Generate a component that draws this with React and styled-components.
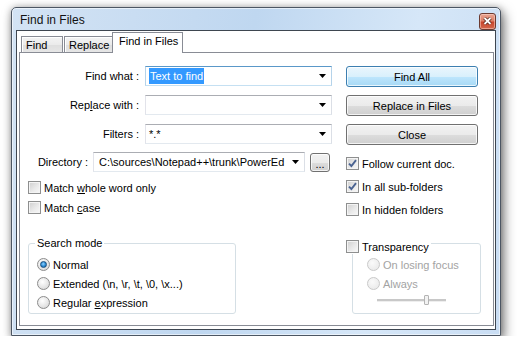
import styled, { createGlobalStyle } from "styled-components";

const GlobalStyle = createGlobalStyle`
  body {
    margin: 0;
    background: #ffffff;
    font-family: "Liberation Sans", Arial, sans-serif;
    font-size: 11px;
    color: #000;
  }
`;

const Window = styled.div`
  box-sizing: border-box;
  width: 490px;
  height: 329px;
  margin: 7px 0 0 11px;
  padding: 0 4px 5px 4px;
  display: flex;
  flex-direction: column;
  border: 1px solid #4c5663;
  border-radius: 5px 5px 0 0;
  background: linear-gradient(100deg, #d3e3f4 0%, #bfd7f0 45%, #d6e7f8 75%, #c9ddf3 100%);
  box-shadow: 3px 5px 12px rgba(0, 0, 0, 0.5), 0 0 7px rgba(0, 0, 0, 0.25),
    inset 0 0 0 1px rgba(255, 255, 255, 0.55);
`;

const TitleBar = styled.div`
  height: 22px;
  display: flex;
  align-items: center;
  justify-content: space-between;
  padding-left: 4px;
`;

const Title = styled.span`
  font-size: 12px;
  color: #111;
  margin-top: 2px;
`;

const CloseButton = styled.div`
  width: 17px;
  height: 17px;
  box-sizing: border-box;
  margin: 4px 0 0 0;
  border: 1px solid #6c3a30;
  border-radius: 3px;
  background: linear-gradient(to bottom, #e9a593 0%, #dc8068 45%, #c8452c 55%, #d4694d 100%);
  box-shadow: inset 0 0 0 1px rgba(255, 220, 210, 0.5);
  display: flex;
  align-items: center;
  justify-content: center;
`;

const Client = styled.div`
  flex: 1;
  display: flex;
  flex-direction: column;
  background: #ffffff;
  border: 1px solid #3e4650;
  padding: 2px 1px 3px 2px;
`;

const TabStrip = styled.div`
  display: flex;
  align-items: flex-end;
  height: 20px;
  padding-left: 2px;
  margin-bottom: -1px;
  position: relative;
  z-index: 1;
`;

const Tab = styled.div`
  box-sizing: border-box;
  width: ${(p) => p.$w}px;
  height: ${(p) => (p.$active ? 21 : 17)}px;
  margin-left: ${(p) => (p.$active ? -1 : 0)}px;
  margin-right: ${(p) => (p.$gap ? 1 : 0)}px;
  padding: ${(p) => (p.$active ? "2px 0 0 6px" : "2px 0 0 4px")};
  border: 1px solid #898c95;
  border-bottom: ${(p) => (p.$active ? "none" : "1px solid #898c95")};
  background: ${(p) =>
    p.$active ? "#ffffff" : "linear-gradient(to bottom, #f4f4f4 0%, #ebebeb 50%, #dedede 51%, #e6e6e6 100%)"};
  box-shadow: ${(p) => (p.$active ? "none" : "inset 0 1px 0 #fff, inset 1px 0 0 #fff")};
  line-height: 13px;
  white-space: nowrap;
  position: relative;
  z-index: ${(p) => (p.$active ? 0 : 1)};
`;

const Panel = styled.div`
  flex: 1;
  display: flex;
  border: 1px solid #898c95;
  background: #ffffff;
  padding-top: 13px;
`;

const LeftCol = styled.div`
  width: 326px;
  display: flex;
  flex-direction: column;
`;

const RightCol = styled.div`
  width: 134px;
  display: flex;
  flex-direction: column;
`;

const FieldGrid = styled.div`
  display: grid;
  grid-template-columns: 121px 187px;
  grid-auto-rows: 20px;
  column-gap: 4px;
  row-gap: 9px;
  align-items: center;
`;

const FieldLabel = styled.span`
  text-align: right;
  padding-right: ${(p) => p.$pr || 0}px;
  white-space: nowrap;
`;

const U = styled.span`
  text-decoration: underline;
`;

const Combo = styled.div`
  box-sizing: border-box;
  height: 20px;
  width: ${(p) => (p.$w ? `${p.$w}px` : "auto")};
  display: flex;
  align-items: center;
  padding: 0 5px 0 2px;
  background: #fff;
  border: 1px solid;
  border-color: ${(p) =>
    p.$focused ? "#5a98c9 #b5d3ea #c5e0f2 #b5d3ea" : "#abadb3 #dbdfe6 #e3e9ef #e2e3ea"};
`;

const ComboText = styled.span`
  flex: 1;
  white-space: nowrap;
  padding-left: ${(p) => p.$pl ?? 1}px;
  line-height: 16px;
`;

const Selected = styled.span`
  background: #3399ff;
  color: #fff;
  padding: 0 1px;
  line-height: 16px;
  display: inline-block;
`;

const Arrow = () => (
  <svg width="7" height="4" viewBox="0 0 7 4" style={{ flexShrink: 0, marginLeft: 4 }}>
    <path d="M0 0 H7 L3.5 4 Z" fill="#000" />
  </svg>
);

const DirRow = styled.div`
  display: flex;
  align-items: center;
  height: 20px;
  margin-top: 8px;
`;

const DirLabel = styled.span`
  width: 68px;
  text-align: right;
  margin-right: 5px;
  white-space: nowrap;
`;

const Button = styled.div`
  box-sizing: border-box;
  width: ${(p) => p.$w || 132}px;
  height: ${(p) => p.$h || 21}px;
  display: flex;
  align-items: center;
  justify-content: center;
  border: 1px solid ${(p) => (p.$default ? "#3c7fb1" : "#707070")};
  border-radius: 3px;
  background: ${(p) =>
    p.$default
      ? "linear-gradient(to bottom, #eaf6fd 0%, #d9f0fc 50%, #bee6fd 51%, #a7d9f5 100%)"
      : "linear-gradient(to bottom, #f2f2f2 0%, #ebebeb 50%, #dddddd 51%, #cfcfcf 100%)"};
  box-shadow: inset 0 0 0 1px rgba(255, 255, 255, 0.75);
  white-space: nowrap;
`;

const DotsButton = styled(Button)`
  margin-left: 5px;
  align-items: flex-end;
  padding-bottom: 3px;
  line-height: 8px;
`;

const ButtonStack = styled.div`
  display: flex;
  flex-direction: column;
  gap: 8px;
`;

const OptionList = styled.div`
  display: flex;
  flex-direction: column;
  gap: ${(p) => p.$gap}px;
  margin-top: ${(p) => p.$mt}px;
  padding-left: ${(p) => p.$pl || 0}px;
`;

const OptionRow = styled.div`
  display: flex;
  align-items: center;
  height: 15px;
  gap: 3px;
  white-space: nowrap;
  color: ${(p) => (p.$disabled ? "#a3a3a3" : "#000")};
`;

const CheckBoxBox = styled.span`
  box-sizing: border-box;
  width: 13px;
  height: 13px;
  flex-shrink: 0;
  border: 1px solid #8e8f8f;
  background: linear-gradient(135deg, #cfcfcf 0%, #e9e9e9 55%, #f9f9f9 100%);
  box-shadow: inset 0 0 0 1px #f4f4f4;
  display: inline-flex;
  align-items: center;
  justify-content: center;
`;

const CheckBox = ({ checked }) => (
  <CheckBoxBox>
    {checked && (
      <svg width="9" height="9" viewBox="0 0 9 9">
        <path d="M1 4.6 L3.4 7 L8 1.2" fill="none" stroke="#4a6391" strokeWidth="1.9" />
      </svg>
    )}
  </CheckBoxBox>
);

const RadioDot = styled.span`
  box-sizing: border-box;
  width: 13px;
  height: 13px;
  flex-shrink: 0;
  border-radius: 50%;
  border: 1px solid ${(p) => (p.$disabled ? "#c9c9c9" : "#8c8c8c")};
  background: ${(p) =>
    p.$disabled
      ? "radial-gradient(circle at 40% 35%, #fafafa, #e6e6e6)"
      : "radial-gradient(circle at 40% 35%, #ffffff 0%, #e4e4e4 60%, #cfcfcf 100%)"};
  display: inline-flex;
  align-items: center;
  justify-content: center;

  &::after {
    content: "";
    display: ${(p) => (p.$checked ? "block" : "none")};
    width: 7px;
    height: 7px;
    border-radius: 50%;
    box-sizing: border-box;
    border: 1px solid #1b4f7d;
    background: radial-gradient(circle at 45% 40%, #8fd2ff 0%, #2a8ad4 55%, #1a5c99 100%);
  }
`;

const GroupBox = styled.div`
  position: relative;
  box-sizing: border-box;
  width: ${(p) => p.$w}px;
  height: 71px;
  margin-top: ${(p) => p.$mt}px;
  margin-left: ${(p) => p.$ml}px;
  border: 1px solid #d5dfe5;
  border-radius: 3px;
  padding: 11px 0 0 ${(p) => p.$pl}px;
`;

const Legend = styled.span`
  position: absolute;
  top: -8px;
  left: 6px;
  padding: 0 2px;
  background: #fff;
  line-height: 14px;
`;

const LegendCheck = styled.div`
  position: absolute;
  top: -5px;
  left: -7px;
  padding-right: 2px;
  background: #fff;
`;

const RadioList = styled.div`
  display: flex;
  flex-direction: column;
`;

const RadioRow = styled.div`
  display: flex;
  align-items: center;
  gap: 3px;
  height: 19px;
  white-space: nowrap;
  color: ${(p) => (p.$disabled ? "#a3a3a3" : "#000")};
`;

const Slider = styled.div`
  position: relative;
  width: 69px;
  height: 12px;
  margin: 1px 0 0 10px;

  &::before {
    content: "";
    position: absolute;
    left: 0;
    right: 0;
    top: 5px;
    height: 2px;
    background: #c8c8c8;
    border-bottom: 1px solid #eeeeee;
  }
`;

const Thumb = styled.span`
  position: absolute;
  left: 47px;
  top: 1px;
  width: 5px;
  height: 10px;
  box-sizing: border-box;
  border: 1px solid #b4b4b4;
  border-radius: 1px;
  background: #f2f2f2;
`;

export default function App() {
  return (
    <>
      <GlobalStyle />
      <Window>
        <TitleBar>
          <Title>Find in Files</Title>
          <CloseButton>
            <svg width="9" height="8" viewBox="0 0 9 8">
              <path d="M1.5 1 L7.5 7 M7.5 1 L1.5 7" stroke="#4a1a10" strokeWidth="3.2" />
              <path d="M1.5 1 L7.5 7 M7.5 1 L1.5 7" stroke="#ffffff" strokeWidth="1.8" />
            </svg>
          </CloseButton>
        </TitleBar>
        <Client>
          <TabStrip>
            <Tab $w={42} $gap>Find</Tab>
            <Tab $w={49}>Replace</Tab>
            <Tab $w={71} $active>Find in Files</Tab>
          </TabStrip>
          <Panel>
            <LeftCol>
              <FieldGrid>
                <FieldLabel $pr={2}>Find what :</FieldLabel>
                <Combo $focused>
                  <ComboText>
                    <Selected>Text to find</Selected>
                  </ComboText>
                  <Arrow />
                </Combo>
                <FieldLabel $pr={2}>
                  Rep<U>l</U>ace with :
                </FieldLabel>
                <Combo>
                  <ComboText />
                  <Arrow />
                </Combo>
                <FieldLabel $pr={2}>Filters :</FieldLabel>
                <Combo>
                  <ComboText>*.*</ComboText>
                  <Arrow />
                </Combo>
              </FieldGrid>
              <DirRow>
                <DirLabel>Directory :</DirLabel>
                <Combo $w={212}>
                  <ComboText $pl={3}>C:\sources\Notepad++\trunk\PowerEd</ComboText>
                  <Arrow />
                </Combo>
                <DotsButton $w={20} $h={19}>...</DotsButton>
              </DirRow>
              <OptionList $mt={8} $gap={5} $pl={8}>
                <OptionRow>
                  <CheckBox />
                  <span>
                    Match <U>w</U>hole word only
                  </span>
                </OptionRow>
                <OptionRow>
                  <CheckBox />
                  <span>
                    Match <U>c</U>ase
                  </span>
                </OptionRow>
              </OptionList>
              <GroupBox $w={208} $mt={28} $ml={8} $pl={8}>
                <Legend>Search mode</Legend>
                <RadioList>
                  <RadioRow>
                    <RadioDot $checked />
                    Normal
                  </RadioRow>
                  <RadioRow>
                    <RadioDot />
                    Extended (\n, \r, \t, \0, \x...)
                  </RadioRow>
                  <RadioRow>
                    <RadioDot />
                    <span>
                      Regular <U>e</U>xpression
                    </span>
                  </RadioRow>
                </RadioList>
              </GroupBox>
            </LeftCol>
            <RightCol>
              <ButtonStack>
                <Button $default>Find All</Button>
                <Button>Replace in Files</Button>
                <Button>Close</Button>
              </ButtonStack>
              <OptionList $mt={11} $gap={8}>
                <OptionRow>
                  <CheckBox checked />
                  Follow current doc.
                </OptionRow>
                <OptionRow>
                  <CheckBox checked />
                  In all sub-folders
                </OptionRow>
                <OptionRow>
                  <CheckBox />
                  In hidden folders
                </OptionRow>
              </OptionList>
              <GroupBox $w={129} $mt={26} $ml={6} $pl={14}>
                <LegendCheck>
                  <OptionRow>
                    <CheckBox />
                    Transparency
                  </OptionRow>
                </LegendCheck>
                <RadioList>
                  <RadioRow $disabled>
                    <RadioDot $disabled />
                    On losing focus
                  </RadioRow>
                  <RadioRow $disabled>
                    <RadioDot $disabled />
                    Always
                  </RadioRow>
                  <Slider>
                    <Thumb />
                  </Slider>
                </RadioList>
              </GroupBox>
            </RightCol>
          </Panel>
        </Client>
      </Window>
    </>
  );
}
